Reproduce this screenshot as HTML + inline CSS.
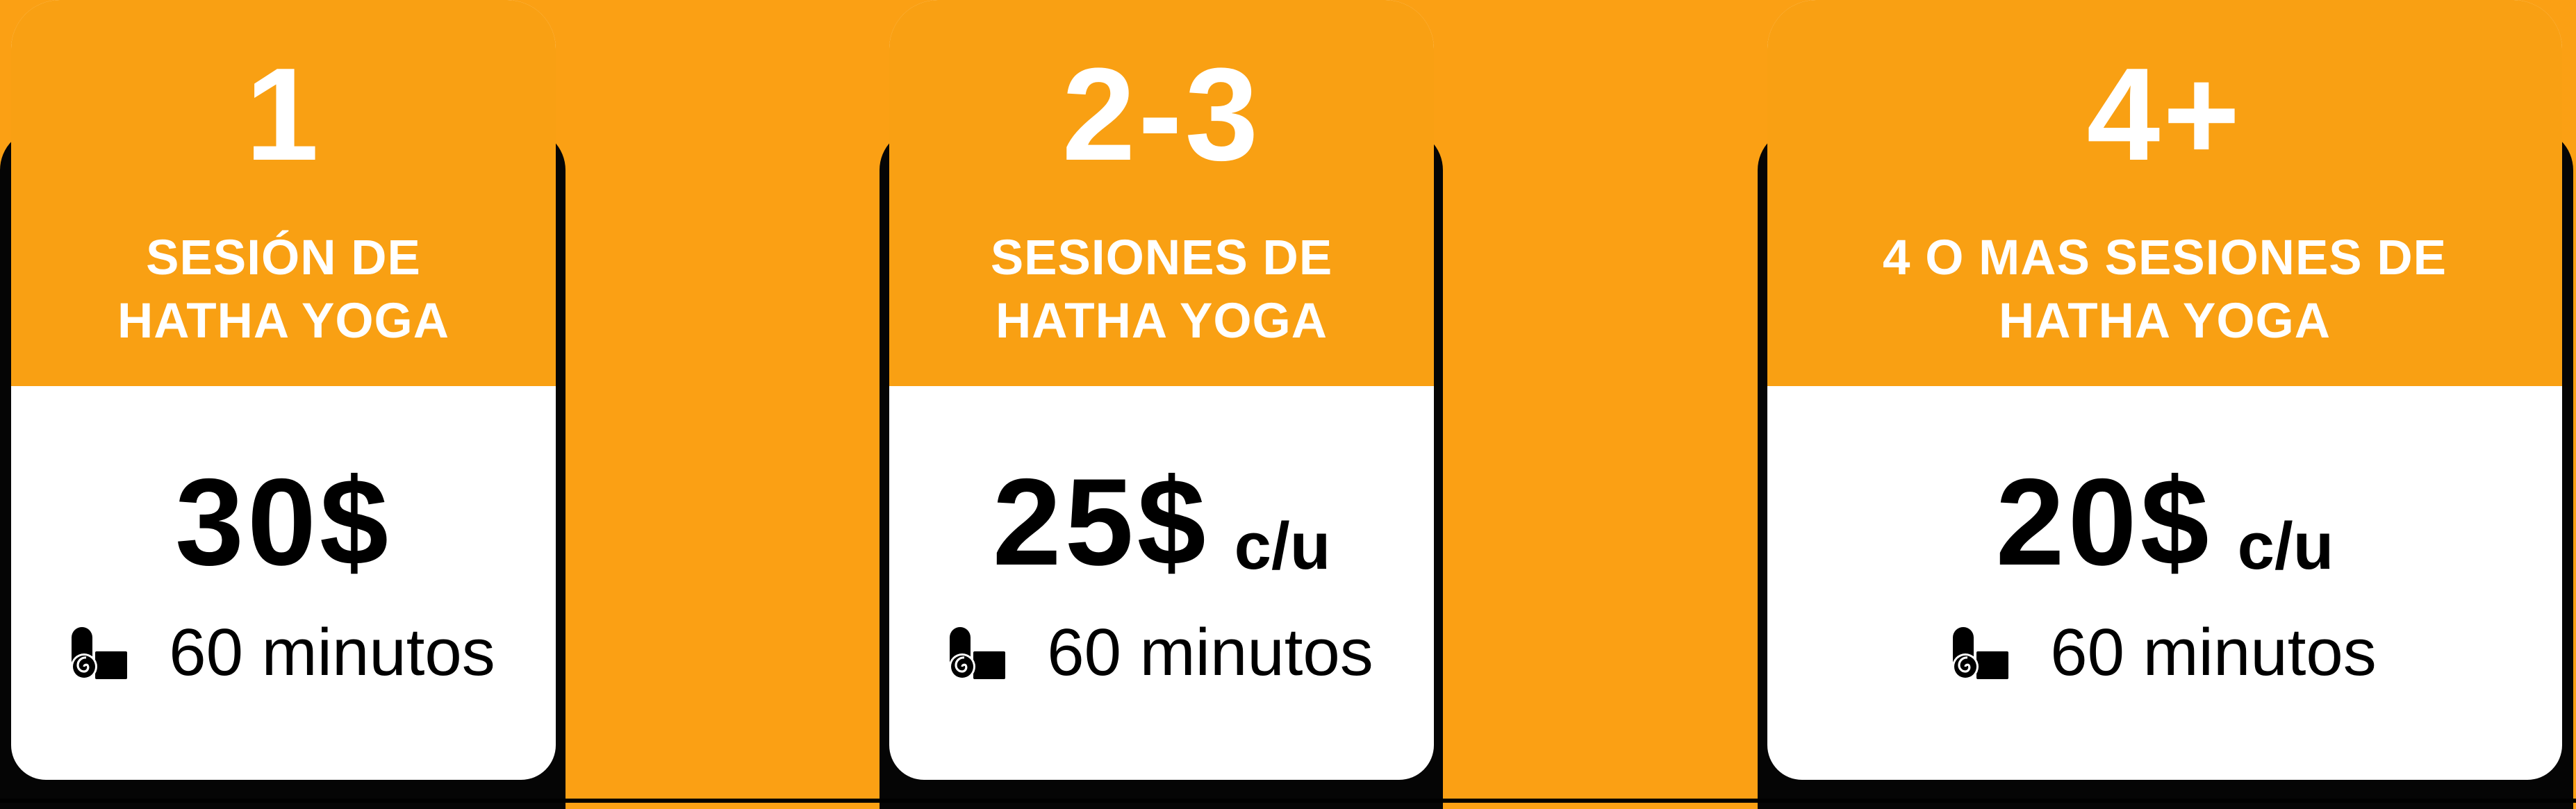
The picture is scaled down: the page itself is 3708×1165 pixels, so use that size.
<!DOCTYPE html>
<html><head><meta charset="utf-8"><style>
*{margin:0;padding:0;box-sizing:border-box}
body{width:3708px;height:1156px;background:#FBA014;position:relative;overflow:hidden;font-family:"Liberation Sans",Arial,sans-serif}
.sh{position:absolute;background:#050505;top:185px;height:980px;border-radius:60px 60px 0 0}
.strip{position:absolute;left:0;right:0;top:1150px;height:6px;background:#000}
.card{position:absolute;top:0;height:1123px;border-radius:70px 70px 50px 50px;overflow:hidden;background:#fff}
.head{position:absolute;left:0;right:0;top:0;height:556px;background:#F9A013;color:#fff;text-align:center}
.num{position:absolute;left:0;right:0;top:70px;font-size:190px;font-weight:bold;line-height:190px;letter-spacing:4px}
.t{position:absolute;left:0;right:0;top:326px;font-size:71px;font-weight:bold;line-height:91px;letter-spacing:1px}
.price{position:absolute;left:0;right:0;top:662px;text-align:center;font-size:178px;font-weight:bold;line-height:180px;color:#000;white-space:nowrap;letter-spacing:5px}
.price small{font-size:96px;margin-left:36px;letter-spacing:0;position:relative;top:6px}
.dur{position:absolute;left:0;right:0;top:892px;text-align:center;font-size:96px;line-height:96px;color:#000;white-space:nowrap}
.dur svg{width:82px;height:75px;vertical-align:-6px;margin-right:58px}
</style></head><body>
<div class="sh" style="left:0;width:814px"></div>
<div class="sh" style="left:1266px;width:811px"></div>
<div class="sh" style="left:2530px;width:1174px"></div>
<div class="strip"></div>

<svg width="0" height="0" style="position:absolute"><defs><g id="mat">
<rect x="0" y="0" width="30" height="70" rx="15" fill="#000"/>
<rect x="34" y="35" width="46" height="40" rx="2" fill="#000"/>
<circle cx="18" cy="57" r="19" fill="#fff"/>
<circle cx="18" cy="57" r="16" fill="#000"/>
<path d="M18 57 a3 3 0 0 1 5 -2 a6 6 0 0 1 -5 9 a9 9 0 0 1 -9 -9 a11 11 0 0 1 12 -11" fill="none" stroke="#fff" stroke-width="3.2"/>
</g></defs></svg>

<div class="card" style="left:16px;width:784px">
<div class="head"><div class="num">1</div><div class="t">SESIÓN DE<br>HATHA YOGA</div></div>
<div class="price">30$</div>
<div class="dur"><svg viewBox="0 0 82 75"><use href="#mat"/></svg>60 minutos</div>
</div>

<div class="card" style="left:1280px;width:784px">
<div class="head"><div class="num">2-3</div><div class="t">SESIONES DE<br>HATHA YOGA</div></div>
<div class="price">25$<small>c/u</small></div>
<div class="dur"><svg viewBox="0 0 82 75"><use href="#mat"/></svg>60 minutos</div>
</div>

<div class="card" style="left:2544px;width:1144px">
<div class="head"><div class="num">4+</div><div class="t">4 O MAS SESIONES DE<br>HATHA YOGA</div></div>
<div class="price">20$<small>c/u</small></div>
<div class="dur"><svg viewBox="0 0 82 75"><use href="#mat"/></svg>60 minutos</div>
</div>
</body></html>
